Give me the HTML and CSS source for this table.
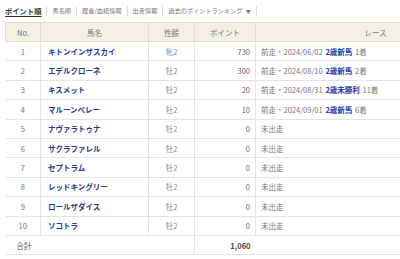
FILE: index.html
```html
<!DOCTYPE html>
<html lang="ja">
<head>
<meta charset="utf-8">
<link rel="stylesheet" href="styles.css">
</head>
<body>
<div class="page">
  <nav class="tabs">
    <span class="tab active">ポイント順</span>
    <span class="tab">馬名順</span>
    <span class="tab">厩舎/血統情報</span>
    <span class="tab">出走情報</span>
    <span class="tab">過去のポイントランキング <span class="caret">▼</span></span>
  </nav>
  <table class="rank">
    <colgroup>
      <col class="c-no"><col class="c-name"><col class="c-sex"><col class="c-pt"><col class="c-race">
    </colgroup>
    <thead>
      <tr><th>No.</th><th>馬名</th><th>性齢</th><th>ポイント</th><th>レース</th></tr>
    </thead>
    <tbody>
      <tr><td class="no">1</td><td class="name">キトンインザスカイ</td><td class="sex">牝2</td><td class="pt">730</td><td class="race">前走・2024/06/02 <b>2歳新馬</b> 1着</td></tr>
      <tr><td class="no">2</td><td class="name">エデルクローネ</td><td class="sex">牡2</td><td class="pt">300</td><td class="race">前走・2024/08/10 <b>2歳新馬</b> 2着</td></tr>
      <tr><td class="no">3</td><td class="name">キスメット</td><td class="sex">牡2</td><td class="pt">20</td><td class="race">前走・2024/08/31 <b>2歳未勝利</b> 11着</td></tr>
      <tr><td class="no">4</td><td class="name">マルーンベレー</td><td class="sex">牡2</td><td class="pt">10</td><td class="race">前走・2024/09/01 <b>2歳新馬</b> 6着</td></tr>
      <tr><td class="no">5</td><td class="name">ナヴァラトゥナ</td><td class="sex">牡2</td><td class="pt">0</td><td class="race">未出走</td></tr>
      <tr><td class="no">6</td><td class="name">サクラファレル</td><td class="sex">牡2</td><td class="pt">0</td><td class="race">未出走</td></tr>
      <tr><td class="no">7</td><td class="name">セプトラム</td><td class="sex">牡2</td><td class="pt">0</td><td class="race">未出走</td></tr>
      <tr><td class="no">8</td><td class="name">レッドキングリー</td><td class="sex">牡2</td><td class="pt">0</td><td class="race">未出走</td></tr>
      <tr><td class="no">9</td><td class="name">ロールザダイス</td><td class="sex">牡2</td><td class="pt">0</td><td class="race">未出走</td></tr>
      <tr><td class="no">10</td><td class="name">ソコトラ</td><td class="sex">牡2</td><td class="pt">0</td><td class="race">未出走</td></tr>
      <tr class="total"><td class="sum-label" colspan="3">合計</td><td class="pt sum">1,060</td><td class="race-empty"></td></tr>
    </tbody>
  </table>
</div>
</body>
</html>
```
FILE: styles.css
```css
html, body {
  margin: 0;
  padding: 0;
  background: #fff;
}
body {
  font-family: "Noto Sans CJK JP", "Noto Sans", sans-serif;
  font-size: 7.5px;
  color: #555;
  overflow: hidden;
}
.page {
  padding: 4px 0 0 5px;
  width: 560px;
}
.tabs {
  display: flex;
  align-items: center;
  height: 14px;
  margin-bottom: 4px;
}
.tab {
  padding: 0 5px;
  border-left: 1px solid #ddd;
  line-height: 10px;
  color: #777;
  font-size: 6.2px;
}
.tab:first-child {
  border-left: none;
  padding-left: 0;
}
.tab:last-child {
  border-right: 1px solid #ddd;
}
.tab.active {
  color: #333;
  font-weight: bold;
  font-size: 7.3px;
  text-decoration: underline;
  text-underline-offset: 2px;
}
.caret {
  font-size: 5px;
  margin-left: 2px;
}
.rank {
  border-collapse: collapse;
  table-layout: fixed;
  width: 490px;
}
.c-no { width: 35px; }
.c-name { width: 108px; }
.c-sex { width: 46px; }
.c-pt { width: 61px; }
.c-race { width: 240px; }
.rank th {
  background: #f3efe5;
  font-weight: normal;
  color: #777;
  height: 18px;
  padding: 0 5px;
  border: 1px solid #e2ddd3;
  text-align: center;
}
.rank td {
  height: 18.4px;
  padding: 0 5px;
  border-bottom: 1px solid #e4e4e4;
  border-left: 1px solid #e4e4e4;
  white-space: nowrap;
}
.rank td:first-child {
  border-left: none;
}
.no { text-align: center; color: #777; }
.name { color: #253a8c; font-weight: bold; padding-left: 7px !important; }
.sex { text-align: center; color: #888; }
.pt { text-align: right; color: #666; }
.race { color: #777; }
.race b { color: #2540a8; margin: 0 1px; }
.sum-label { padding-left: 11px !important; color: #555; }
.sum { font-weight: bold; color: #444; }
.total td { border-left: none; }
.total td.sum { border-left: 1px solid #e4e4e4; }
```
